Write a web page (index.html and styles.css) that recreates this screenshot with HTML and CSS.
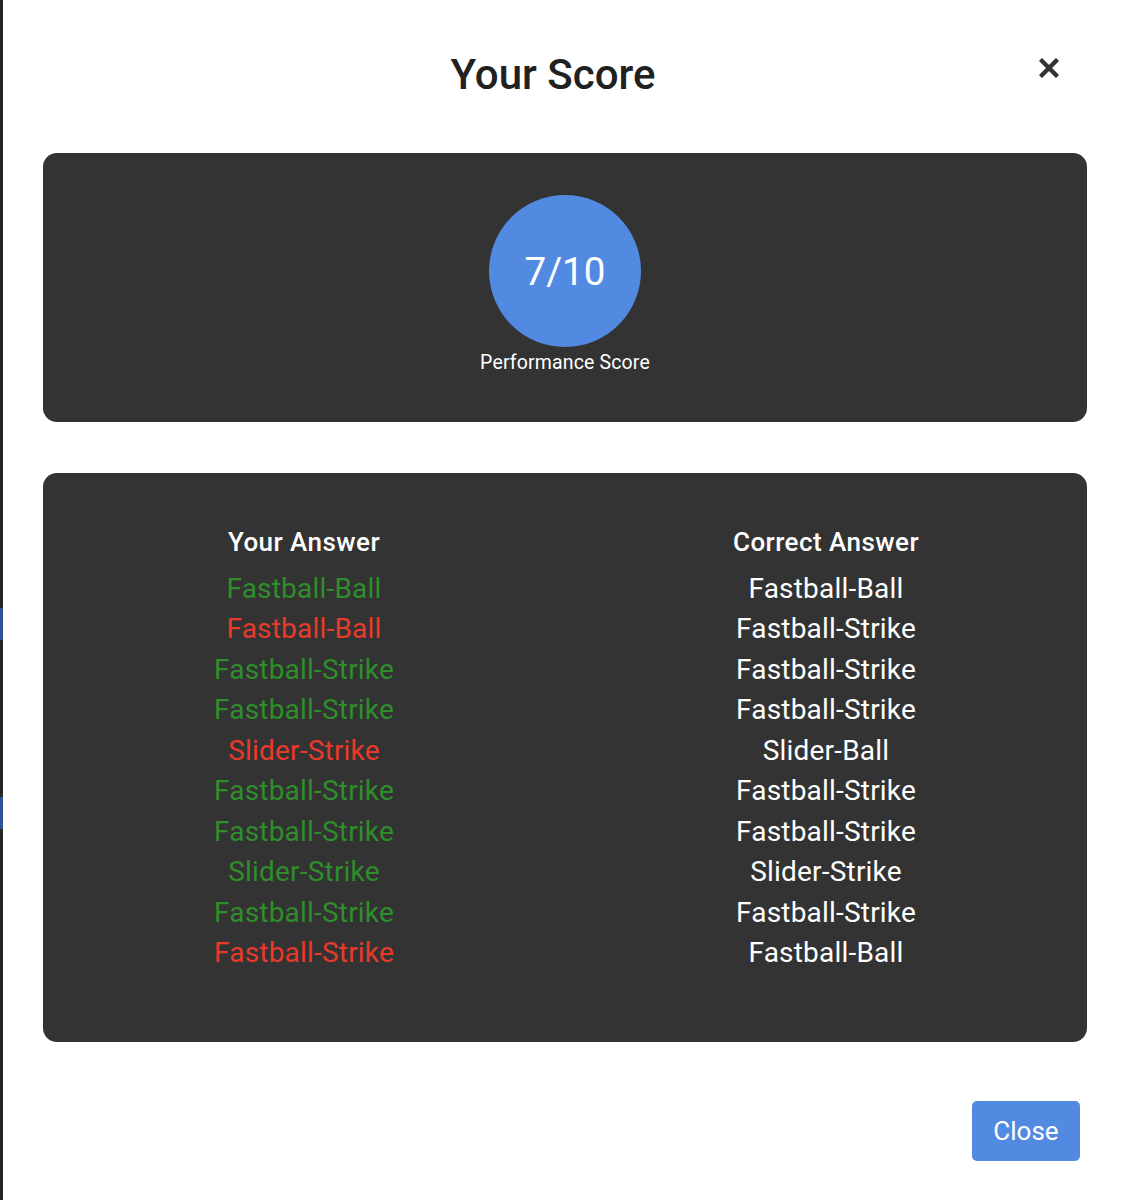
FILE: index.html
```html
<!DOCTYPE html>
<html lang="en">
<head>
<meta charset="utf-8">
<title>Your Score</title>
<link rel="stylesheet" href="styles.css">
</head>
<body>
<div class="page">
  <div class="edge">
    <div class="edge-mark edge-mark-1"></div>
    <div class="edge-mark edge-mark-2"></div>
  </div>
  <div class="modal">
    <div class="modal-header">
      <h1 class="modal-title">Your Score</h1>
      <button class="modal-x" aria-label="Close">
        <svg width="20" height="20" viewBox="0 0 20 20"><path d="M3 3 L17 17 M17 3 L3 17" stroke="#333" stroke-width="4.4" stroke-linecap="square" fill="none"/></svg>
      </button>
    </div>
    <section class="card score-card">
      <div class="score-circle">7/10</div>
      <div class="score-label">Performance Score</div>
    </section>
    <section class="card answers-card">
      <div class="answer-col">
        <div class="col-head">Your Answer</div>
        <div class="row good">Fastball-Ball</div>
        <div class="row bad">Fastball-Ball</div>
        <div class="row good">Fastball-Strike</div>
        <div class="row good">Fastball-Strike</div>
        <div class="row bad">Slider-Strike</div>
        <div class="row good">Fastball-Strike</div>
        <div class="row good">Fastball-Strike</div>
        <div class="row good">Slider-Strike</div>
        <div class="row good">Fastball-Strike</div>
        <div class="row bad">Fastball-Strike</div>
      </div>
      <div class="answer-col">
        <div class="col-head">Correct Answer</div>
        <div class="row">Fastball-Ball</div>
        <div class="row">Fastball-Strike</div>
        <div class="row">Fastball-Strike</div>
        <div class="row">Fastball-Strike</div>
        <div class="row">Slider-Ball</div>
        <div class="row">Fastball-Strike</div>
        <div class="row">Fastball-Strike</div>
        <div class="row">Slider-Strike</div>
        <div class="row">Fastball-Strike</div>
        <div class="row">Fastball-Ball</div>
      </div>
    </section>
    <div class="modal-footer">
      <button class="btn-close">Close</button>
    </div>
  </div>
</div>
</body>
</html>
```
FILE: styles.css
```css
html, body {
  margin: 0;
  padding: 0;
  background: #ffffff;
}
body {
  font-family: Roboto, "Liberation Sans", Arial, sans-serif;
  color: #222;
}
.page {
  display: flex;
  min-height: 1200px;
}
.edge {
  width: 3px;
  flex: none;
  background: #262626;
  display: flex;
  flex-direction: column;
}
.edge-mark {
  width: 3px;
  height: 32px;
  background: #2f5391;
}
.edge-mark-1 { margin-top: 608px; }
.edge-mark-2 { margin-top: 157px; }

.modal {
  flex: 1;
  padding: 0 37px 0 40px;
  display: flex;
  flex-direction: column;
}
.modal-header {
  position: relative;
  padding-top: 50px;
  margin-bottom: 53px;
}
.modal-title {
  margin: 0;
  padding-right: 24px;
  text-align: center;
  font-size: 42px;
  line-height: 50px;
  font-weight: 500;
  color: #212121;
}
.modal-x {
  position: absolute;
  top: 58px;
  right: 28px;
  width: 20px;
  height: 20px;
  padding: 0;
  border: 0;
  background: none;
  display: flex;
}
.card {
  background: #333333;
  border-radius: 14px;
}
.score-card {
  height: 269px;
  box-sizing: border-box;
  padding-top: 42px;
  display: flex;
  flex-direction: column;
  align-items: center;
  margin-bottom: 51px;
}
.score-circle {
  width: 152px;
  height: 152px;
  border-radius: 50%;
  background: #528ae1;
  color: #ffffff;
  font-size: 38.5px;
  font-weight: 400;
  display: flex;
  align-items: center;
  justify-content: center;
}
.score-label {
  margin-top: 4px;
  font-size: 19.5px;
  line-height: 23px;
  letter-spacing: 0.15px;
  color: #ffffff;
}
.answers-card {
  height: 569px;
  box-sizing: border-box;
  padding-top: 54px;
  display: grid;
  grid-template-columns: 1fr 1fr;
}
.answer-col {
  display: flex;
  flex-direction: column;
  align-items: center;
}
.col-head {
  font-size: 26px;
  line-height: 30px;
  font-weight: 500;
  letter-spacing: 0.45px;
  color: #ffffff;
  margin-bottom: 12px;
}
.row {
  font-size: 28px;
  line-height: 40.44px;
  letter-spacing: 0.2px;
  color: #ffffff;
}
.row.good { color: #2f8d2b; }
.row.bad { color: #e83a2b; }

.modal-footer {
  display: flex;
  justify-content: flex-end;
  padding-top: 59px;
  padding-right: 7px;
}
.btn-close {
  width: 108px;
  height: 60px;
  border: 0;
  border-radius: 5px;
  background: #528ae1;
  color: #ffffff;
  font-family: Roboto, "Liberation Sans", Arial, sans-serif;
  font-size: 26px;
  padding: 0;
}
```
